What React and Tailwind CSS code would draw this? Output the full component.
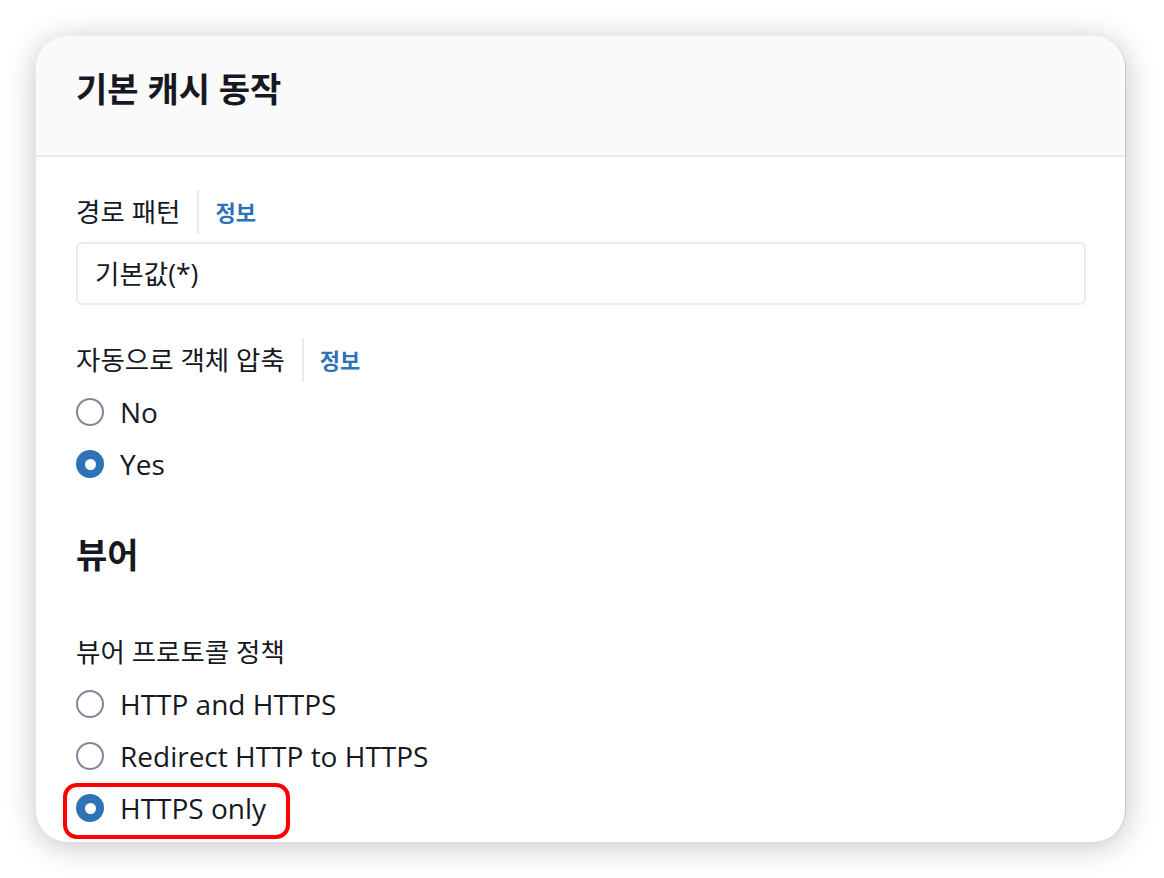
import React from "react";

const FONT = { fontFamily: '"Open Sans", "Noto Sans CJK KR", sans-serif' };

function Radio({ checked }) {
  if (checked) {
    return (
      <span className="flex h-[28px] w-[28px] shrink-0 items-center justify-center rounded-full bg-[#2e73b8]">
        <span className="h-[11px] w-[11px] rounded-full bg-white" />
      </span>
    );
  }
  return <span className="h-[28px] w-[28px] shrink-0 rounded-full border-[2px] border-[#7d8998] bg-white" />;
}

function RadioRow({ label, checked, highlight }) {
  return (
    <div className="relative flex h-[52px] items-center gap-[16px]">
      <Radio checked={checked} />
      <span className="text-[28px] font-medium leading-[34px] text-[#16191f]">{label}</span>
      {highlight && (
        <span className="pointer-events-none absolute left-[-13px] top-[1px] h-[56px] w-[227px] rounded-[14px] border-[4px] border-[#ff0000]" />
      )}
    </div>
  );
}

function LabelRow({ label, info }) {
  return (
    <div className="flex h-[44px] items-center">
      <span className="text-[26.5px] leading-[34px] text-[#16191f]">{label}</span>
      {info && (
        <>
          <span className="ml-[17px] h-full w-[2px] bg-[#e9ebed]" />
          <a className="ml-[16px] text-[22px] font-bold leading-[32px] text-[#2e73b8]">정보</a>
        </>
      )}
    </div>
  );
}

export default function App() {
  return (
    <div className="min-h-[878px] w-[1164px] bg-white pl-[36px] pt-[36px]" style={FONT}>
      <div className="h-[806px] w-[1090px] overflow-hidden rounded-[32px] border-r border-[#c5cacd] bg-white shadow-[0_4px_30px_rgba(0,0,0,0.24)]">
        <div className="h-[121px] border-b-[2px] border-[#e9ebed] bg-[#fafafa] px-[40px] pt-[31px]">
          <h1 className="text-[34px] font-bold leading-[44px] text-[#16191f]">기본 캐시 동작</h1>
        </div>
        <div className="px-[40px] pt-[33px]">
          <LabelRow label="경로 패턴" info />
          <div className="mt-[8px] flex h-[63px] w-[1010px] items-center rounded-[6px] border-[2px] border-[#e9ebed] px-[17px]">
            <span className="text-[26.5px] leading-[34px] text-[#16191f]">기본값(*)</span>
          </div>
          <div className="mt-[33px]">
            <LabelRow label="자동으로 객체 압축" info />
          </div>
          <div className="mt-[4px]">
            <RadioRow label="No" />
            <RadioRow label="Yes" checked />
          </div>
          <h2 className="mt-[43px] text-[34px] font-bold leading-[44px] text-[#16191f]">뷰어</h2>
          <div className="mt-[53px]">
            <LabelRow label="뷰어 프로토콜 정책" />
          </div>
          <div className="mt-[4px]">
            <RadioRow label="HTTP and HTTPS" />
            <RadioRow label="Redirect HTTP to HTTPS" />
            <RadioRow label="HTTPS only" checked highlight />
          </div>
        </div>
      </div>
    </div>
  );
}
